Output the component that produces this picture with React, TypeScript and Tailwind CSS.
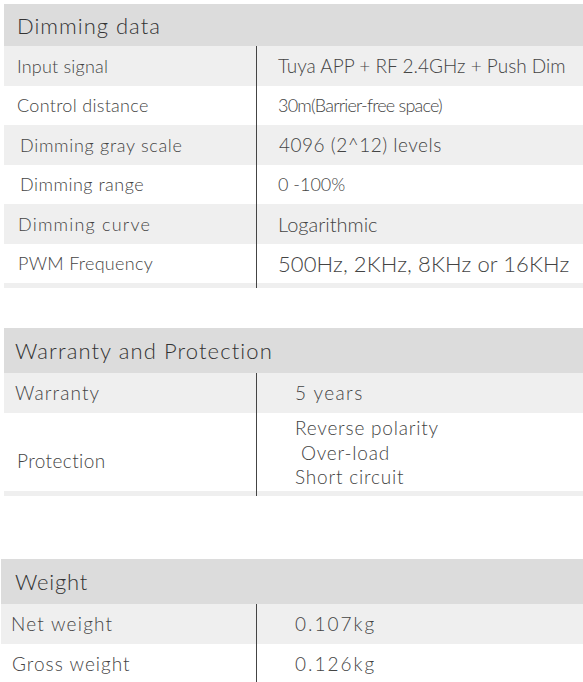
import React from 'react'

interface Irow {
  label: React.ReactNode
  value: React.ReactNode
  h: string
  bg: string
  lc: string
  vc: string
}

const font = { fontFamily: 'Lato, "Open Sans", sans-serif' }

const SpecTable = ({ title, titleClass, headH, left, leftW, rows, strip }: any) => {
  return (
    <div className={`${left} w-full`}>
      <div className={`${headH} bg-[#dcdcdc] flex items-center`}>
        <span className={titleClass}>{title}</span>
      </div>
      {rows.map((r: Irow, i: number) => (
        <div key={i} className={`flex ${r.h} ${r.bg}`}>
          <div className={`${leftW} border-r border-[#444] flex items-center shrink-0`}>
            <span className={r.lc}>{r.label}</span>
          </div>
          <div className="flex-1 flex items-center whitespace-nowrap">
            <span className={r.vc}>{r.value}</span>
          </div>
        </div>
      ))}
      {strip ? (
        <div className="flex h-[5px] bg-[#efefef]">
          <div className={`${leftW} border-r border-[#444] shrink-0`} />
        </div>
      ) : null}
    </div>
  )
}

const GRAY = 'bg-[#efefef]'
const WHITE = 'bg-white'

const dimming: Irow[] = [
  { label: 'Input signal', value: 'Tuya APP + RF 2.4GHz + Push Dim', h: 'h-[40px]', bg: GRAY, lc: 'pl-[13px] text-[18px] tracking-[0.2px]', vc: 'pl-[21px] text-[19px]' },
  { label: 'Control distance', value: '30m(Barrier-free space)', h: 'h-[39px]', bg: WHITE, lc: 'pl-[13px] text-[18px] tracking-[0.3px]', vc: 'pl-[21px] text-[18px] tracking-[-0.8px]' },
  { label: 'Dimming gray scale', value: '4096 (2^12) levels', h: 'h-[40px]', bg: GRAY, lc: 'pl-[16px] text-[18px] tracking-[0.7px]', vc: 'pl-[22px] text-[19px] tracking-[0.5px]' },
  { label: 'Dimming range', value: '0 -100%', h: 'h-[39px]', bg: WHITE, lc: 'pl-[16px] text-[18px] tracking-[0.5px]', vc: 'pl-[21px] text-[18px]' },
  { label: 'Dimming curve', value: 'Logarithmic', h: 'h-[40px]', bg: GRAY, lc: 'pl-[14px] text-[18px] tracking-[1.2px]', vc: 'pl-[21px] text-[20px]' },
  { label: 'PWM Frequency', value: '500Hz, 2KHz, 8KHz or 16KHz', h: 'h-[39px]', bg: WHITE, lc: 'pl-[14px] text-[18px] tracking-[0.3px]', vc: 'pl-[21px] text-[22px] tracking-[0.1px]' },
]

const warranty: Irow[] = [
  { label: 'Warranty', value: '5 years', h: 'h-[40px]', bg: GRAY, lc: 'pl-[11px] text-[19px] tracking-[1.1px]', vc: 'pl-[38px] text-[19px] tracking-[1.4px]' },
  {
    label: 'Protection',
    value: (
      <span className="flex flex-col leading-[24.5px] pt-[2px]">
        <span>Reverse polarity</span>
        <span>&nbsp;Over-load</span>
        <span>Short circuit</span>
      </span>
    ),
    h: 'h-[78px]', bg: WHITE, lc: 'pl-[13px] text-[19px] tracking-[0.4px] pt-[18px]', vc: 'pl-[38px] text-[19px] tracking-[0.8px]',
  },
]

const weight: Irow[] = [
  { label: 'Net weight', value: '0.107kg', h: 'h-[40px]', bg: GRAY, lc: 'pl-[10px] text-[19px] tracking-[1.2px]', vc: 'pl-[38px] text-[19px] tracking-[2px]' },
  { label: 'Gross weight', value: '0.126kg', h: 'h-[40px]', bg: WHITE, lc: 'pl-[11px] text-[19px] tracking-[1px]', vc: 'pl-[38px] text-[19px] tracking-[2px]' },
]

export default function App() {
  return (
    <div className="w-[583px] h-[682px] overflow-hidden bg-white text-[#444] font-light" style={font}>
      <div className="pt-[4px]">
        <SpecTable
          title="Dimming data"
          titleClass="pl-[13px] text-[22px] tracking-[1px] text-[#333]"
          headH="h-[42px]"
          left="pl-[4px]"
          leftW="w-[253px]"
          rows={dimming}
          strip
        />
      </div>
      <div className="pt-[40px]">
        <SpecTable
          title="Warranty and Protection"
          titleClass="pl-[11px] text-[22px] tracking-[1.1px] text-[#333]"
          headH="h-[45px]"
          left="pl-[4px]"
          leftW="w-[253px]"
          rows={warranty}
          strip
        />
      </div>
      <div className="pt-[63px]">
        <SpecTable
          title="Weight"
          titleClass="pl-[14px] text-[22px] tracking-[0.8px] text-[#333]"
          headH="h-[45px]"
          left="pl-[1px]"
          leftW="w-[256px]"
          rows={weight}
        />
      </div>
    </div>
  )
}
